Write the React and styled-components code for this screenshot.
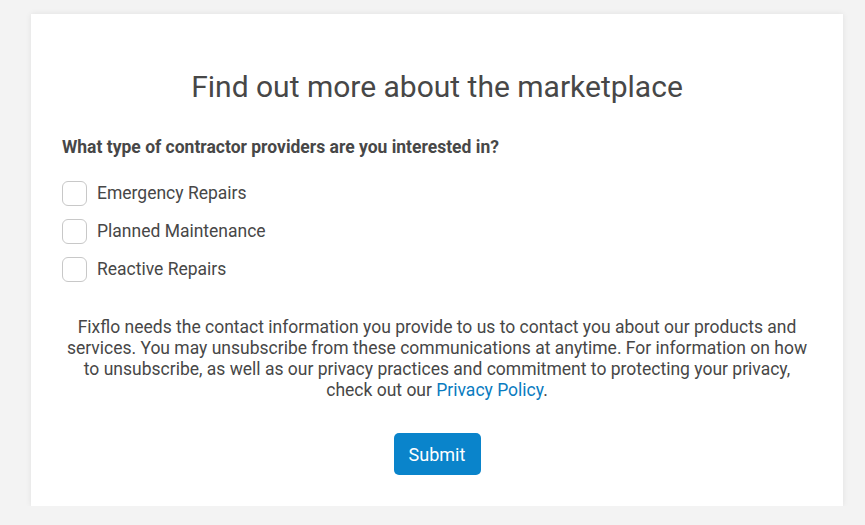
import React from 'react'
import styled, { createGlobalStyle } from 'styled-components'

const Global = createGlobalStyle`
  body {
    margin: 0;
    background: #f3f3f3;
    font-family: Roboto, "Liberation Sans", sans-serif;
    color: #474747;
  }
`

const Page = styled.div`
  padding: 14px 0 0 31px;
`

const Card = styled.div`
  box-sizing: border-box;
  width: 812px;
  height: 492px;
  background: #fff;
  box-shadow: 0 0 6px rgba(0, 0, 0, 0.08);
  padding: 56px 31px 31px;
  display: flex;
  flex-direction: column;
`

const Title = styled.h1`
  margin: 0;
  font-size: 30px;
  line-height: 34px;
  font-weight: 400;
  text-align: center;
  color: #474747;
`

const Question = styled.div`
  margin-top: 33px;
  font-size: 17.5px;
  line-height: 20px;
  font-weight: 700;
  color: #474747;
`

const Options = styled.div`
  margin-top: 17px;
  display: flex;
  flex-direction: column;
`

const Option = styled.label`
  height: 38px;
  display: flex;
  align-items: center;
  gap: 10px;
  font-size: 17.5px;
  color: #474747;
  cursor: pointer;
`

const Box = styled.span`
  box-sizing: border-box;
  width: 25px;
  height: 25px;
  border: 1px solid #c8c8c8;
  border-radius: 6px;
  background: #fff;
`

const Notice = styled.p`
  margin: 29px 0 0;
  font-size: 17.5px;
  line-height: 21px;
  text-align: center;
  color: #474747;
`

const Link = styled.a`
  color: #0a7bc0;
  text-decoration: none;
`

const Actions = styled.div`
  margin-top: 32px;
  display: flex;
  justify-content: center;
`

const Button = styled.button`
  width: 87px;
  height: 42px;
  border: none;
  border-radius: 5px;
  background: #0a84cb;
  color: #fff;
  font-family: Roboto, "Liberation Sans", sans-serif;
  font-size: 18px;
  cursor: pointer;
`

const options = ['Emergency Repairs', 'Planned Maintenance', 'Reactive Repairs']

export default function App() {
  return (
    <Page>
      <Global />
      <Card>
        <Title>Find out more about the marketplace</Title>
        <Question>What type of contractor providers are you interested in?</Question>
        <Options>
          {options.map((o) => (
            <Option key={o}>
              <Box />
              {o}
            </Option>
          ))}
        </Options>
        <Notice>
          Fixflo needs the contact information you provide to us to contact you about our products and
          services. You may unsubscribe from these communications at anytime. For information on how
          to unsubscribe, as well as our privacy practices and commitment to protecting your privacy,
          check out our <Link href="#">Privacy Policy</Link>.
        </Notice>
        <Actions>
          <Button>Submit</Button>
        </Actions>
      </Card>
    </Page>
  )
}
